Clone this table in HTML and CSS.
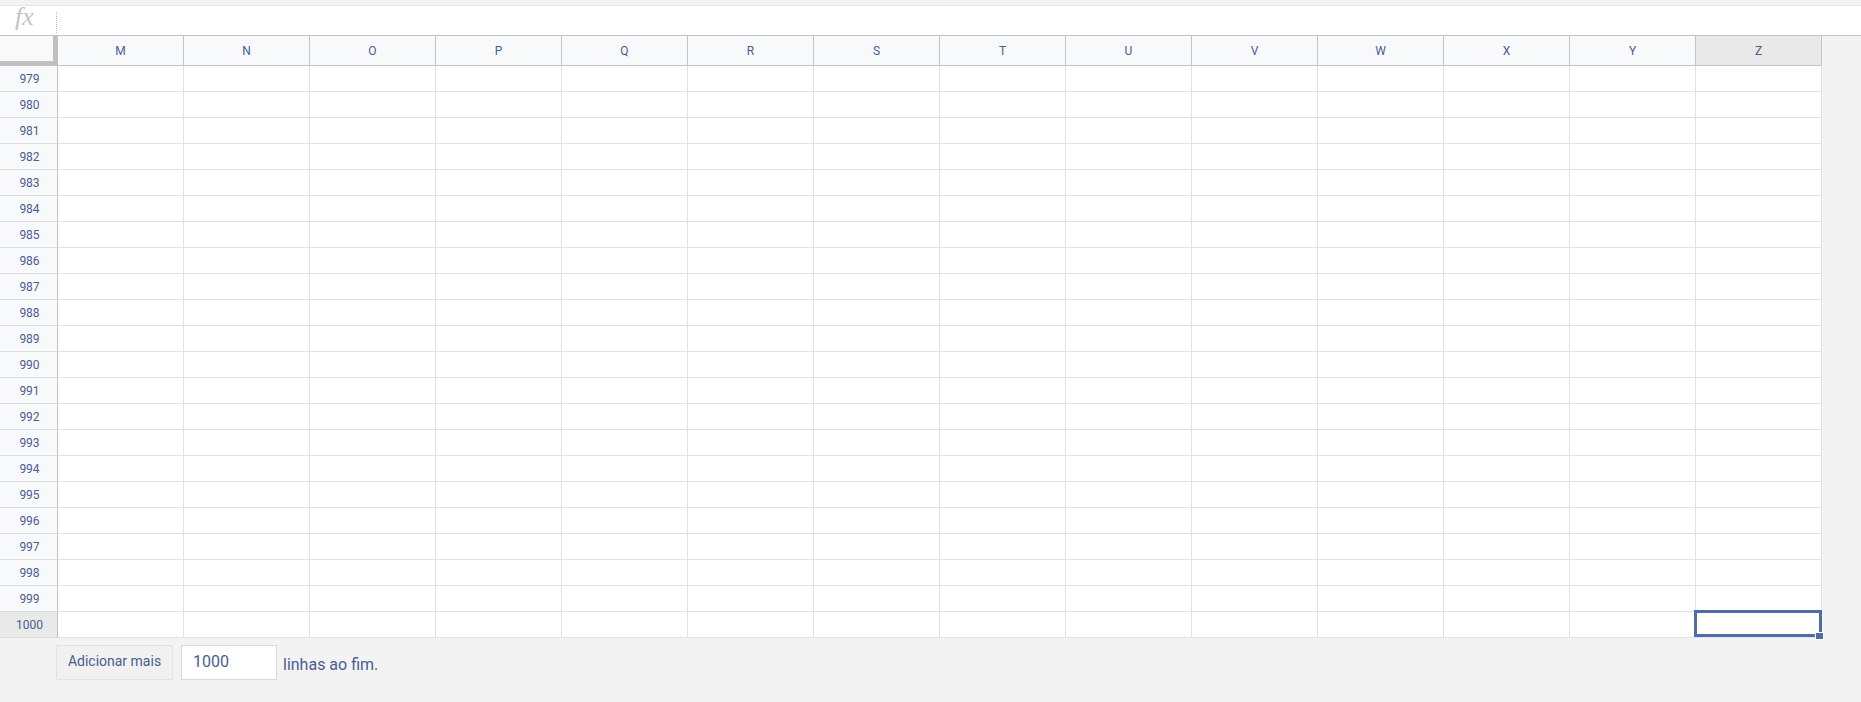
FILE: index.html
```html
<!DOCTYPE html>
<html lang="pt">

<head>
    <meta charset="UTF-8">
    <title>Planilha</title>
    <link rel="stylesheet" href="styles.css">
</head>

<body>
    <div class="formula-bar">
        <span class="fx">fx</span>
        <span class="fx-sep"></span>
    </div>

    <div class="sheet" id="sheet">
        <div class="row head-row" id="headRow">
            <div class="corner"></div>
        </div>
    </div>

    <div class="add-rows">
        <button class="add-btn">Adicionar mais</button>
        <input class="add-input" type="text" value="1000">
        <span class="add-label">linhas ao fim.</span>
    </div>

    <script>
        var cols = ["M", "N", "O", "P", "Q", "R", "S", "T", "U", "V", "W", "X", "Y", "Z"];
        var headRow = document.getElementById("headRow");
        var sheet = document.getElementById("sheet");

        cols.forEach(function (c) {
            var h = document.createElement("div");
            h.className = "col-head" + (c === "Z" ? " active" : "");
            h.textContent = c;
            headRow.appendChild(h);
        });

        for (var r = 979; r <= 1000; r++) {
            var row = document.createElement("div");
            row.className = "row";
            var num = document.createElement("div");
            num.className = "row-head" + (r === 1000 ? " active" : "");
            num.textContent = r;
            row.appendChild(num);
            cols.forEach(function (c) {
                var cell = document.createElement("div");
                cell.className = "cell";
                // selected cell with the fill handle
                if (r === 1000 && c === "Z") {
                    cell.innerHTML = '<div class="selection"></div><div class="handle"></div>';
                }
                row.appendChild(cell);
            });
            sheet.appendChild(row);
        }
    </script>
</body>

</html>
```

FILE: styles.css
```css
body {
    margin: 0;
    padding: 0;
    background: #f3f3f3;
    font-family: Roboto, "Liberation Sans", Arial, sans-serif;
    color: #4a5d92;
    overflow: hidden;
}

.formula-bar {
    background: #fff;
    margin-top: 5px;
    border-top: 1px solid #e6e6e6;
    height: 29px;
    display: flex;
    align-items: center;
}

.fx {
    font-family: "Liberation Serif", "DejaVu Serif", serif;
    font-style: italic;
    font-size: 26px;
    color: #c4c4c4;
    margin-left: 15px;
    width: 41px;
    line-height: 1;
    margin-top: -8px;
}

.fx-sep {
    width: 0;
    height: 21px;
    border-left: 1px dotted #b8b8b8;
    margin-top: 4px;
}

.sheet {
    border-top: 1px solid #c4c4c4;
}

.row {
    display: flex;
    height: 26px;
}

.head-row {
    height: 30px;
}

.corner {
    width: 58px;
    height: 30px;
    box-sizing: border-box;
    background: #f8f9fa;
    border-right: 5px solid #c0c0c0;
    border-bottom: 5px solid #c0c0c0;
}

.col-head {
    width: 126px;
    height: 30px;
    box-sizing: border-box;
    background: #f8f9fa;
    border-right: 1px solid #c4c4c4;
    border-bottom: 1px solid #c4c4c4;
    font-size: 12px;
    display: flex;
    align-items: center;
    justify-content: center;
}

.col-head.active,
.row-head.active {
    background: #e9e9e9;
}

.row-head {
    width: 58px;
    height: 26px;
    box-sizing: border-box;
    background: #f8f9fa;
    border-right: 1px solid #c4c4c4;
    border-bottom: 1px solid #dcdcdc;
    font-size: 12px;
    display: flex;
    align-items: center;
    justify-content: center;
    padding-left: 2px;
}

.cell {
    width: 126px;
    height: 26px;
    box-sizing: border-box;
    background: #fff;
    border-right: 1px solid #e2e2e2;
    border-bottom: 1px solid #e2e2e2;
    position: relative;
}

.selection {
    position: absolute;
    left: -2px;
    top: -2px;
    width: 128px;
    height: 27px;
    box-sizing: border-box;
    border: 3px solid #4f6da6;
}

.handle {
    position: absolute;
    left: 119px;
    top: 20px;
    width: 7px;
    height: 6px;
    background: #4f6da6;
    border: 1px solid #fff;
}

.add-rows {
    display: flex;
    align-items: center;
    padding: 7px 0 0 56px;
}

.add-btn {
    width: 117px;
    height: 35px;
    box-sizing: border-box;
    background: #f1f1f1;
    border: 1px dotted #d4d4d4;
    border-radius: 2px;
    font-family: Roboto, "Liberation Sans", Arial, sans-serif;
    font-size: 14px;
    color: #4a5d92;
    padding: 0 0 4px;
}

.add-input {
    width: 96px;
    height: 35px;
    box-sizing: border-box;
    margin-left: 8px;
    border: 1px solid #dadada;
    background: #fff;
    font-family: Roboto, "Liberation Sans", Arial, sans-serif;
    font-size: 16px;
    color: #4a5d92;
    padding: 0 0 2px 11px;
    outline: none;
}

.add-label {
    margin-left: 6px;
    font-size: 16px;
    margin-top: 4px;
}
```
